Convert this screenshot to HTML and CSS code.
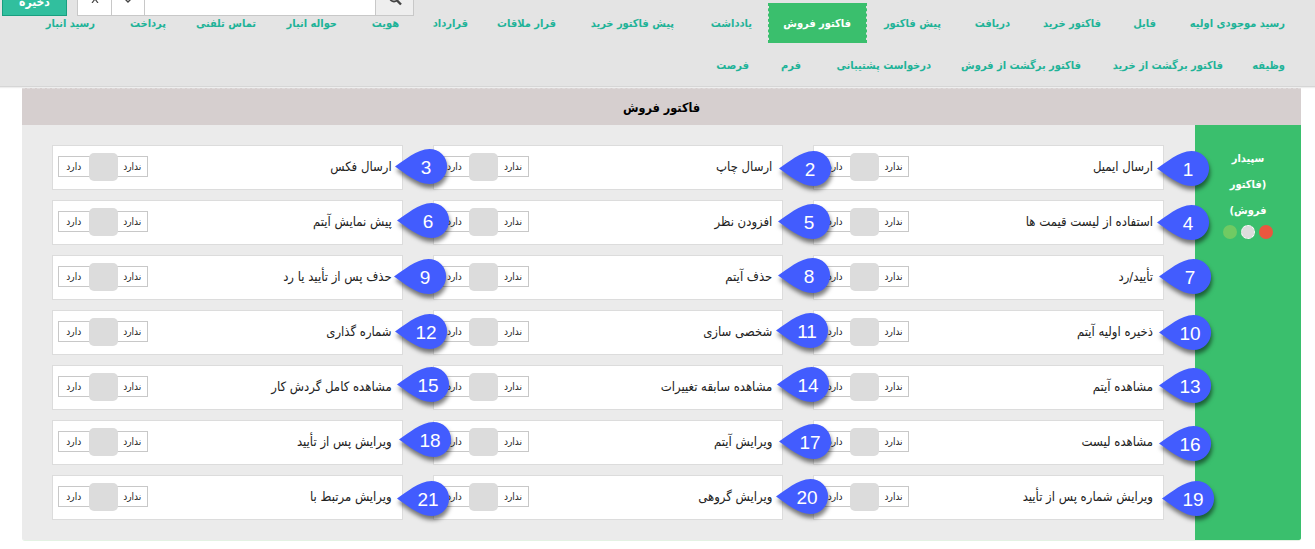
FILE: index.html
```html
<!DOCTYPE html>
<html lang="fa" dir="rtl">
<head>
<meta charset="utf-8">
<title>فاکتور فروش</title>
<link rel="stylesheet" href="styles.css">
</head>
<body>
<header class="top">
  <div class="toolbar">
    <div class="search">
      <span class="search-btn"><svg width="14" height="14" viewBox="0 0 14 14"><circle cx="6" cy="5.500" r="4" fill="none" stroke="#444" stroke-width="2"/><path d="M9 8.500l4 4" stroke="#444" stroke-width="2.400"/></svg></span>
      <span class="search-input"></span>
      <span class="step"><svg width="8" height="5" viewBox="0 0 8 5"><path d="M1 1l3 3 3-3" fill="none" stroke="#444" stroke-width="1.400"/></svg></span>
      <span class="step"><svg width="8" height="8" viewBox="0 0 8 8"><path d="M1 0l6 8M7 0L1 8" fill="none" stroke="#444" stroke-width="1.200"/></svg></span>
    </div>
    <button class="save">ذخیره</button>
  </div>
  <nav class="tabs">
    <div class="tab-row">
      <a class="tab" style="width:97px">رسید موجودی اولیه</a>
      <a class="tab" style="width:23px">فایل</a>
      <a class="tab" style="width:59px">فاکتور خرید</a>
      <a class="tab" style="width:37px">دریافت</a>
      <a class="tab" style="width:58px">پیش فاکتور</a>
      <a class="tab active" style="width:67px">فاکتور فروش</a>
      <a class="tab" style="width:46px">یادداشت</a>
      <a class="tab" style="width:86px">پیش فاکتور خرید</a>
      <a class="tab" style="width:56px">قرار ملاقات</a>
      <a class="tab" style="width:37px">قرارداد</a>
      <a class="tab" style="width:30px">هویت</a>
      <a class="tab" style="width:49px">حواله انبار</a>
      <a class="tab" style="width:58px">تماس تلفنی</a>
      <a class="tab" style="width:39px">پرداخت</a>
      <a class="tab" style="width:52px">رسید انبار</a>
    </div>
    <div class="tab-row">
      <a class="tab" style="width:30px">وظیفه</a>
      <a class="tab" style="width:110px">فاکتور برگشت از خرید</a>
      <a class="tab" style="width:118px">فاکتور برگشت از فروش</a>
      <a class="tab" style="width:98px">درخواست پشتیبانی</a>
      <a class="tab" style="width:20px">فرم</a>
      <a class="tab" style="width:33px">فرصت</a>
    </div>
  </nav>
</header>
<main class="panel">
  <h1 class="panel-title">فاکتور فروش</h1>
  <div class="panel-body">
    <aside class="side">
      <p>سپیدار<br>(فاکتور<br>فروش)</p>
      <div class="dots"><i class="dot red"></i><i class="dot gray"></i><i class="dot lime"></i></div>
    </aside>
    <section class="grid">
      <div class="cell"><span>ارسال ایمیل</span><div class="switch"><b>ندارد</b><i></i><b>دارد</b></div></div>
      <div class="cell"><span>ارسال چاپ</span><div class="switch"><b>ندارد</b><i></i><b>دارد</b></div></div>
      <div class="cell"><span>ارسال فکس</span><div class="switch"><b>ندارد</b><i></i><b>دارد</b></div></div>
      <div class="cell"><span>استفاده از لیست قیمت ها</span><div class="switch"><b>ندارد</b><i></i><b>دارد</b></div></div>
      <div class="cell"><span>افزودن نظر</span><div class="switch"><b>ندارد</b><i></i><b>دارد</b></div></div>
      <div class="cell"><span>پیش نمایش آیتم</span><div class="switch"><b>ندارد</b><i></i><b>دارد</b></div></div>
      <div class="cell"><span>تأیید/رد</span><div class="switch"><b>ندارد</b><i></i><b>دارد</b></div></div>
      <div class="cell"><span>حذف آیتم</span><div class="switch"><b>ندارد</b><i></i><b>دارد</b></div></div>
      <div class="cell"><span>حذف پس از تأیید یا رد</span><div class="switch"><b>ندارد</b><i></i><b>دارد</b></div></div>
      <div class="cell"><span>ذخیره اولیه آیتم</span><div class="switch"><b>ندارد</b><i></i><b>دارد</b></div></div>
      <div class="cell"><span>شخصی سازی</span><div class="switch"><b>ندارد</b><i></i><b>دارد</b></div></div>
      <div class="cell"><span>شماره گذاری</span><div class="switch"><b>ندارد</b><i></i><b>دارد</b></div></div>
      <div class="cell"><span>مشاهده آیتم</span><div class="switch"><b>ندارد</b><i></i><b>دارد</b></div></div>
      <div class="cell"><span>مشاهده سابقه تغییرات</span><div class="switch"><b>ندارد</b><i></i><b>دارد</b></div></div>
      <div class="cell"><span>مشاهده کامل گردش کار</span><div class="switch"><b>ندارد</b><i></i><b>دارد</b></div></div>
      <div class="cell"><span>مشاهده لیست</span><div class="switch"><b>ندارد</b><i></i><b>دارد</b></div></div>
      <div class="cell"><span>ویرایش آیتم</span><div class="switch"><b>ندارد</b><i></i><b>دارد</b></div></div>
      <div class="cell"><span>ویرایش پس از تأیید</span><div class="switch"><b>ندارد</b><i></i><b>دارد</b></div></div>
      <div class="cell"><span>ویرایش شماره پس از تأیید</span><div class="switch"><b>ندارد</b><i></i><b>دارد</b></div></div>
      <div class="cell"><span>ویرایش گروهی</span><div class="switch"><b>ندارد</b><i></i><b>دارد</b></div></div>
      <div class="cell"><span>ویرایش مرتبط با</span><div class="switch"><b>ندارد</b><i></i><b>دارد</b></div></div>
    </section>
  </div>
</main>
<svg class="pins" width="1315" height="549" viewBox="0 0 1315 549" direction="ltr">
  <defs><path id="pin" d="M0 0C9-6 22-17.600 34.500-17.600A17.600 17.600 0 0 1 34.500 17.600C22 17.600 9 6 0 0Z"/></defs>
  <g transform="translate(1157 168.500)"><use href="#pin"/><text x="31" y="7.500">1</text></g>
  <g transform="translate(779 168.500)"><use href="#pin"/><text x="31" y="7.500">2</text></g>
  <g transform="translate(395 166.500)"><use href="#pin"/><text x="31" y="7.500">3</text></g>
  <g transform="translate(1157 222.500)"><use href="#pin"/><text x="31" y="7.500">4</text></g>
  <g transform="translate(778 221.500)"><use href="#pin"/><text x="31" y="7.500">5</text></g>
  <g transform="translate(397 220.500)"><use href="#pin"/><text x="31" y="7.500">6</text></g>
  <g transform="translate(1159 276.500)"><use href="#pin"/><text x="31" y="7.500">7</text></g>
  <g transform="translate(778 275.500)"><use href="#pin"/><text x="31" y="7.500">8</text></g>
  <g transform="translate(394 276.500)"><use href="#pin"/><text x="31" y="7.500">9</text></g>
  <g transform="translate(1159 332.500)"><use href="#pin"/><text x="31" y="7.500">10</text></g>
  <g transform="translate(776 330.500)"><use href="#pin"/><text x="31" y="7.500">11</text></g>
  <g transform="translate(395 331.500)"><use href="#pin"/><text x="31" y="7.500">12</text></g>
  <g transform="translate(1159 385.500)"><use href="#pin"/><text x="31" y="7.500">13</text></g>
  <g transform="translate(777 384.500)"><use href="#pin"/><text x="31" y="7.500">14</text></g>
  <g transform="translate(397 384.500)"><use href="#pin"/><text x="31" y="7.500">15</text></g>
  <g transform="translate(1159 443.500)"><use href="#pin"/><text x="31" y="7.500">16</text></g>
  <g transform="translate(779 441.500)"><use href="#pin"/><text x="31" y="7.500">17</text></g>
  <g transform="translate(399 439.500)"><use href="#pin"/><text x="31" y="7.500">18</text></g>
  <g transform="translate(1162 498.500)"><use href="#pin"/><text x="31" y="7.500">19</text></g>
  <g transform="translate(776 496.500)"><use href="#pin"/><text x="31" y="7.500">20</text></g>
  <g transform="translate(397 498.500)"><use href="#pin"/><text x="31" y="7.500">21</text></g>
</svg>
</body>
</html>
```
FILE: styles.css
```css
* { box-sizing: border-box; }
body {
  margin: 0;
  height: 549px;
  overflow: hidden;
  background: #fff;
  font-family: "DejaVu Sans Condensed", "DejaVu Sans", sans-serif;
}
.top {
  height: 87px;
  background: #e4e4e4;
  border-bottom: 1px solid #d6d6d6;
  box-shadow: 0 1px 1px #eee;
}
.toolbar {
  height: 16px;
  margin-bottom: -13px;
  padding-left: 2px;
  display: flex;
  justify-content: flex-end;
  gap: 10px;
}
.search {
  display: flex;
  width: 337px;
  height: 16px;
  border: 1px solid #c8c8c8;
  border-top: 0;
  background: #fff;
}
.search-btn {
  width: 38px;
  background: #eee;
  border-left: 1px solid #c8c8c8;
  overflow: hidden;
}
.search-btn svg { display: block; margin: -8px 11px 0 0; }
.search-input { flex: 1; }
.step {
  width: 33px;
  border-right: 1px solid #c8c8c8;
  display: flex;
  justify-content: center;
  align-items: flex-start;
}
.step:last-child { width: 34px; }
.step svg { margin-top: -2px; }
.step:last-child svg { margin-top: -5px; }
.save {
  width: 65px;
  height: 16px;
  padding: 0 0 7px;
  border: 1px solid #189f80;
  border-top: 0;
  background: #31bf9e;
  color: #fff;
  font: bold 12px/1 "DejaVu Sans Condensed", sans-serif;
  display: flex;
  align-items: flex-end;
  justify-content: center;
}
.tab-row { display: flex; height: 42px; padding-right: 14px; }
.tab {
  box-sizing: content-box;
  height: 40px;
  padding: 0 15px;
  border: 0 dashed transparent;
  border-width: 0 1px;
  color: #1fb398;
  font-size: 11px;
  font-weight: bold;
  line-height: 42px;
  white-space: nowrap;
}
.tab.active { background: #3abf6d; background-clip: padding-box; color: #fff; border-color: #3abf6d; }
.panel {
  width: 1279px;
  height: 453px;
  margin: 1px 14px 0 0;
  border-bottom: 1px solid #e4f2e4;
  border-radius: 0 0 3px 3px;
  overflow: hidden;
}
.panel-title {
  margin: 0;
  height: 37px;
  border-top: 1px dashed #e0dcdc;
  background: #d6cfcf;
  color: #000;
  text-align: center;
  font-size: 12.5px;
  line-height: 37px;
}
.panel-body { display: flex; height: 415px; }
.side {
  width: 106px;
  background: #3abf6d;
  color: #fff;
  padding-top: 21px;
  text-align: center;
  font-size: 11px;
  font-weight: bold;
  line-height: 26px;
}
.side p { margin: 0; }
.dots { display: flex; justify-content: center; gap: 4px; margin-top: 1px; }
.dot { width: 14px; height: 14px; border-radius: 50%; }
.red { background: #e9573f; }
.gray { background: #ddd; border: 1px dashed #fff; }
.lime { background: #70ca63; }
.grid {
  flex: 1;
  padding: 20px 31px 20px 30px;
  background: #ebebeb;
  display: grid;
  grid-template-columns: repeat(3, 1fr);
  grid-auto-rows: 45px;
  align-content: start;
  gap: 10px 30px;
}
.cell {
  background: #fff;
  border: 1px solid #dcdcdc;
  padding: 7px 10px 0 5px;
  display: flex;
  justify-content: space-between;
  color: #222;
  font-size: 13px;
  line-height: 27px;
  white-space: nowrap;
}
.switch {
  width: 90px;
  height: 21px;
  margin-top: 3px;
  border: 1px solid #c8c8c8;
  display: flex;
  justify-content: space-between;
  font-size: 10px;
  line-height: 20px;
}
.switch b { flex: 1; font-weight: normal; text-align: center; color: #222; }
.switch i { width: 29px; height: 28px; margin-top: -4px; border-radius: 5px; background: #dcdcdc; }
.pins { position: absolute; left: 0; top: 0; }
.pins use { fill: #425cfe; filter: drop-shadow(1px 4px 2px rgba(0, 0, 0, .5)); }
.pins text { fill: #fff; font: 19px "Liberation Sans", sans-serif; text-anchor: middle; }
```
